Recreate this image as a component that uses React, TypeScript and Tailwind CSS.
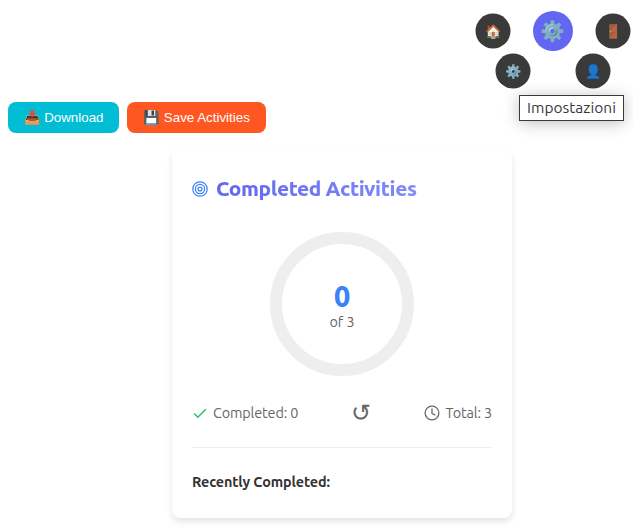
import React from 'react';

const ui = "font-['Ubuntu','Noto_Sans',sans-serif]";

function RoundButton({ icon, label }: { icon: string; label: string }) {
  return (
    <button aria-label={label} className="flex size-[35px] transform-[translate(0.5px,0.5px)] items-center justify-center rounded-full bg-[#3a3a3a] text-[13.3px] leading-none text-white">
      {icon}
    </button>
  );
}

function RadialMenu() {
  return (
    <nav className="relative ml-auto flex w-[158px] flex-col pt-[11px]">
      <div className="flex h-10 justify-between pr-[3px]">
        <div className="pt-[2px]"><RoundButton icon="🏠" label="Home" /></div>
        <button aria-label="Menu" className="flex size-10 items-center justify-center rounded-full bg-[#6366f1] text-[20px] leading-none text-white">⚙️</button>
        <div className="pt-[2px]"><RoundButton icon="🚪" label="Logout" /></div>
      </div>
      <div className="mt-[2px] flex gap-[45px] pl-5">
        <RoundButton icon="⚙️" label="Settings" />
        <RoundButton icon="👤" label="Profile" />
      </div>
      <div className="absolute left-11 top-[95px] flex h-[26px] w-[105px] items-center justify-center border border-[#3a3a3a] bg-white text-[15.5px] text-[#3a3a3a] shadow-[0_2px_16px_rgba(0,0,0,0.25)]">
        <span className="whitespace-nowrap">Impostazioni</span>
      </div>
    </nav>
  );
}

function BullseyeIcon() {
  return (
    <svg viewBox="0 0 16 16" className="size-4 fill-none stroke-[#3b82f6]" strokeWidth="1.25">
      <circle cx="8" cy="8" r="7.2" />
      <circle cx="8" cy="8" r="4.6" />
      <circle cx="8" cy="8" r="2" />
    </svg>
  );
}

function CheckIcon() {
  return (
    <svg viewBox="0 0 16 16" className="size-4 fill-none stroke-[#22c55e]" strokeWidth="1.4">
      <path d="M2.2 8.6 5.8 12.2 13.8 4.2" />
    </svg>
  );
}

function ClockIcon() {
  return (
    <svg viewBox="0 0 16 16" className="size-4 fill-none stroke-[#666]" strokeWidth="1.3" strokeLinecap="round" strokeLinejoin="round">
      <circle cx="8" cy="8" r="6.9" />
      <path d="M8 4v4.5l2.8 1.4" />
    </svg>
  );
}

export default function App() {
  return (
    <main className={`h-[529px] w-[633px] overflow-hidden bg-white ${ui}`}>
      <header className="h-[102px]">
        <RadialMenu />
      </header>
      <div className="flex gap-2 pl-2 font-['Liberation_Sans',sans-serif] text-[13.333px] text-white">
        <button className="h-[31px] w-[111px] whitespace-nowrap rounded-lg bg-[#00bcd4]">📥 Download</button>
        <button className="h-[31px] w-[139px] whitespace-nowrap rounded-lg bg-[#ff5722]">💾 Save Activities</button>
      </div>
      <section className="ml-[172px] mt-[16px] h-[369px] w-[340px] rounded-lg bg-white px-5 pt-[25px] shadow-[0_4px_6px_rgba(0,0,0,0.1)]">
        <div className="flex h-[30px] items-center gap-2">
          <BullseyeIcon />
          <h2 className="whitespace-nowrap bg-gradient-to-r from-[#6366f1] to-[#818cf8] bg-clip-text text-[20.8px] font-extrabold tracking-[-0.4px] text-transparent">Completed Activities</h2>
        </div>
        <div className="mx-auto mt-[28px] flex size-36 flex-col items-center rounded-full border-[12px] border-[#eee] pt-[34px]">
          <strong className="text-[28.8px] font-extrabold leading-[36px] text-[#3b82f6]">0</strong>
          <span className="text-[14.4px] leading-[16px] tracking-[-0.1px] text-[#666]">of 3</span>
        </div>
        <div className="mt-[24px] flex h-[26px] items-center justify-between text-[14.4px] tracking-[-0.12px] text-[#666]">
          <span className="flex items-center gap-[5px] pt-px"><CheckIcon />Completed: 0</span>
          <button className="text-[24px] leading-none">↺</button>
          <span className="flex items-center gap-[5px] pt-px"><ClockIcon />Total: 3</span>
        </div>
        <div className="mt-[21px] border-t border-[#eee] pt-[24px]">
          <h3 className="text-[14.4px] font-bold leading-5 tracking-[-0.13px] text-[#333]">Recently Completed:</h3>
        </div>
      </section>
    </main>
  );
}
